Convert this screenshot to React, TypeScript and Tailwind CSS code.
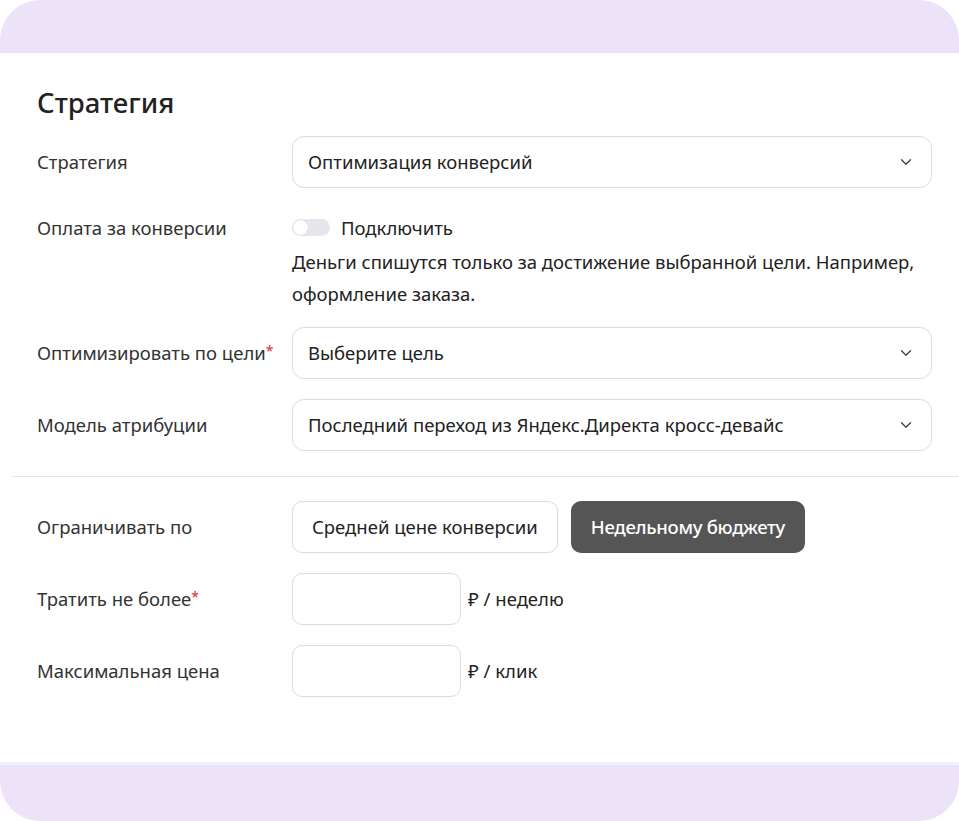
import React from 'react';

const font = { fontFamily: '"Noto Sans", "Open Sans", sans-serif' };

const Chevron = () => (
  <svg width="12" height="8" viewBox="0 0 12 8" fill="none" className="shrink-0">
    <path d="M1.5 1.75L6 6.25l4.5-4.5" stroke="#444" strokeWidth="1.4" strokeLinecap="round" strokeLinejoin="round" />
  </svg>
);

const Select: React.FC<{ value: string }> = ({ value }) => (
  <div className="flex h-[52px] flex-1 items-center justify-between rounded-xl border border-[#dcdce0] pl-[15px] pr-[19px] text-[18.5px] text-[#222]">
    <span>{value}</span>
    <Chevron />
  </div>
);

const Label: React.FC<{ text: string; required?: boolean }> = ({ text, required }) => (
  <div className="w-[255px] shrink-0 text-[18.5px] text-[#333]">
    {text}
    {required && <span className="relative -top-1 text-[14px] text-[#e5262d]">*</span>}
  </div>
);

const App: React.FC = () => {
  return (
    <div className="h-[821px] w-[959px] bg-white" style={font}>
      <div className="flex h-full flex-col overflow-hidden rounded-[40px] bg-[#ece3f8]">
        <div className="h-[53px] shrink-0" />
        <div className="flex h-[709px] flex-col bg-white">
          <div className="pl-[37px] pr-[27px] pt-[34px]">
            <h2 className="text-[27.5px] font-medium leading-[32px] text-[#222]">Стратегия</h2>

            <div className="mt-[17px] flex items-center">
              <Label text="Стратегия" />
              <Select value="Оптимизация конверсий" />
            </div>

            <div className="mt-[23px] flex items-start">
              <div className="pt-[3px]">
                <Label text="Оплата за конверсии" />
              </div>
              <div className="flex-1 text-[18.5px] text-[#222]">
                <div className="flex items-center gap-[11px] py-[3px]">
                  <div className="flex h-[17px] w-[38px] items-center rounded-full bg-[#e6e6ec] px-[1px]">
                    <div className="h-[15px] w-[15px] rounded-full bg-white shadow-[0_0_1px_rgba(0,0,0,0.2)]" />
                  </div>
                  <span>Подключить</span>
                </div>
                <p className="mt-[1px] leading-[32px]">
                  Деньги спишутся только за достижение выбранной цели. Например,
                  <br />
                  оформление заказа.
                </p>
              </div>
            </div>

            <div className="mt-[17px] flex items-center">
              <Label text="Оптимизировать по цели" required />
              <Select value="Выберите цель" />
            </div>

            <div className="mt-[20px] flex items-center">
              <Label text="Модель атрибуции" />
              <Select value="Последний переход из Яндекс.Директа кросс-девайс" />
            </div>
          </div>

          <div className="ml-[12px] mt-[25px] h-px bg-[#e8e8ec]" />

          <div className="px-[37px] pt-[24px]">
            <div className="flex items-center">
              <Label text="Ограничивать по" />
              <div className="flex gap-[13px]">
                <button className="h-[52px] rounded-[10px] border border-[#dcdce0] bg-white px-[19px] text-[18.5px] text-[#222]">
                  Средней цене конверсии
                </button>
                <button className="h-[52px] rounded-[10px] bg-[#555555] px-[20px] text-[18.5px] font-medium tracking-[-0.3px] text-white">
                  Недельному бюджету
                </button>
              </div>
            </div>

            <div className="mt-[20px] flex items-center">
              <Label text="Тратить не более" required />
              <div className="h-[52px] w-[169px] rounded-[10px] border border-[#dcdce0]" />
              <span className="ml-[7px] text-[18.5px] text-[#222]">₽ / неделю</span>
            </div>

            <div className="mt-[20px] flex items-center">
              <Label text="Максимальная цена" />
              <div className="h-[52px] w-[169px] rounded-[10px] border border-[#dcdce0]" />
              <span className="ml-[7px] text-[18.5px] text-[#222]">₽ / клик</span>
            </div>
          </div>
        </div>
        <div className="h-[3px] bg-[#f3eefb]" />
      </div>
    </div>
  );
};

export default App;
